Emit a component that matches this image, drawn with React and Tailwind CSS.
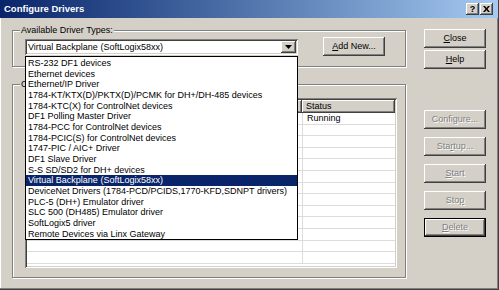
import clsx from 'clsx';

const drivers = [
  'RS-232 DF1 devices',
  'Ethernet devices',
  'Ethernet/IP Driver',
  '1784-KT/KTX(D)/PKTX(D)/PCMK for DH+/DH-485 devices',
  '1784-KTC(X) for ControlNet devices',
  'DF1 Polling Master Driver',
  '1784-PCC for ControlNet devices',
  '1784-PCIC(S) for ControlNet devices',
  '1747-PIC / AIC+ Driver',
  'DF1 Slave Driver',
  'S-S SD/SD2 for DH+ devices',
  'Virtual Backplane (SoftLogix58xx)',
  'DeviceNet Drivers (1784-PCD/PCIDS,1770-KFD,SDNPT drivers)',
  'PLC-5 (DH+) Emulator driver',
  'SLC 500 (DH485) Emulator driver',
  'SoftLogix5 driver',
  'Remote Devices via Linx Gateway',
];

const raised = 'shadow-[inset_-1px_-1px_#404040,inset_1px_1px_#ffffff,inset_-2px_-2px_#808080,inset_2px_2px_#d4d0c8]';
const sunken = 'shadow-[inset_1px_1px_#808080,inset_-1px_-1px_#ffffff,inset_2px_2px_#404040,inset_-2px_-2px_#d4d0c8]';

const Button = ({ children, disabled, isDefault, className }) => (
  <div
    className={clsx(
      'flex h-[19px] w-[62px] items-center justify-center bg-[#d4d0c8] text-[9px] leading-none',
      isDefault
        ? 'border border-black shadow-[inset_-1px_-1px_#404040,inset_1px_1px_#ffffff,inset_-2px_-2px_#808080]'
        : raised,
      disabled ? 'text-[#808080] [text-shadow:1px_1px_0_#ffffff]' : 'text-black',
      className
    )}
  >
    {children}
  </div>
);

const GroupBox = ({ label, className, children }) => (
  <div className={clsx('border border-[#808080] shadow-[1px_1px_0_#ffffff,inset_1px_1px_0_#ffffff]', className)}>
    <div className="-mt-[6px] ml-[7px] h-[11px] w-fit bg-[#d4d0c8] px-[1px] text-[9px] leading-[11px] text-black">
      {label}
    </div>
    {children}
  </div>
);

const TitleButton = ({ children }) => (
  <div className={clsx('flex h-[12px] w-[13px] items-center justify-center bg-[#d4d0c8]', raised)}>
    {children}
  </div>
);

export default function App() {
  const rows = Array.from({ length: 13 });

  return (
    <div className="h-[290px] w-[499px] overflow-hidden bg-[#d4d0c8] font-['Liberation_Sans',Arial,sans-serif] shadow-[inset_-1px_-1px_#404040,inset_-2px_-2px_#808080,inset_1px_0_#ffffff]">
      {/* title bar */}
      <div className="mr-[1px] flex h-[18px] items-center bg-gradient-to-r from-[#0a246a] to-[#a6caf0] pl-[4px] pr-[5px]">
        <span className="text-[9.5px] font-bold leading-none text-white">Configure Drivers</span>
        <div className="ml-auto flex gap-[1px]">
          <TitleButton>
            <span className="text-[9px] font-bold leading-none text-black">?</span>
          </TitleButton>
          <TitleButton>
            <svg width="7" height="6" viewBox="0 0 7 6">
              <path d="M0 0h2l1.5 2 1.5-2h2l-2.5 3 2.5 3h-2l-1.5-2-1.5 2h-2l2.5-3z" fill="#000" />
            </svg>
          </TitleButton>
        </div>
      </div>

      <div className="flex pl-[12px] pt-[12px]">
        {/* left column */}
        <div className="w-[394px]">
          <GroupBox label="Available Driver Types:" className="h-[37px]">
            <div className="ml-[12px] mt-[1px] flex items-start">
              <div className={clsx('relative mt-[2px] flex h-[16px] w-[273px] items-center bg-white', sunken)}>
                <span className="pl-[3px] text-[9px] leading-none text-black">Virtual Backplane (SoftLogix58xx)</span>
                <div className={clsx('ml-auto mr-[2px] flex h-[12px] w-[15px] items-center justify-center bg-[#d4d0c8]', raised)}>
                  <svg width="7" height="4" viewBox="0 0 7 4">
                    <path d="M0 0h7l-3.5 4z" fill="#000" />
                  </svg>
                </div>

                {/* opened list */}
                <div className="absolute left-0 top-[17px] z-10 w-[273px] border border-black bg-white pt-[1px]">
                  {drivers.map((d) => (
                    <div
                      key={d}
                      className={clsx(
                        'h-[10.67px] whitespace-nowrap pl-[2px] text-[9px] leading-[10.67px]',
                        d === 'Virtual Backplane (SoftLogix58xx)' ? 'bg-[#0a246a] text-white' : 'text-black'
                      )}
                    >
                      {d}
                    </div>
                  ))}
                </div>
              </div>
              <Button className="ml-[25px]">
                <span><u>A</u>dd New...</span>
              </Button>
            </div>
          </GroupBox>

          <GroupBox label="Configured Drivers:" className="mt-[17px] h-[194px]">
            <div className={clsx('ml-[12px] mt-[8px] h-[170px] w-[372px] overflow-hidden bg-white p-[2px]', sunken)}>
              <div className="flex h-[13px] text-[9px] leading-[13px] text-black">
                <div className={clsx('w-[275px] bg-[#d4d0c8]', raised)} />
                <div className={clsx('flex-1 bg-[#d4d0c8] pl-[4px]', raised)}>Status</div>
              </div>
              {rows.map((_, i) => (
                <div key={i} className="flex h-[11.6px] border-b border-[#dcdcdc] text-[9px] leading-[11px] text-black">
                  <div className="w-[276px] border-r border-[#dcdcdc]" />
                  <div className="flex-1 pl-[4px]">{i === 0 ? 'Running' : ''}</div>
                </div>
              ))}
            </div>
          </GroupBox>
        </div>

        {/* right column */}
        <div className="-mt-[1px] ml-[18px] flex flex-col">
          <Button><span><u>C</u>lose</span></Button>
          <Button className="mt-[2px]"><span><u>H</u>elp</span></Button>
          <div className="mt-[41px] flex flex-col gap-[8px]">
            <Button disabled>Configure...</Button>
            <Button disabled><span>Sta<u>r</u>tup...</span></Button>
            <Button disabled><span><u>S</u>tart</span></Button>
            <Button disabled><span>Sto<u>p</u></span></Button>
            <Button disabled isDefault><span><u>D</u>elete</span></Button>
          </div>
        </div>
      </div>
    </div>
  );
}
